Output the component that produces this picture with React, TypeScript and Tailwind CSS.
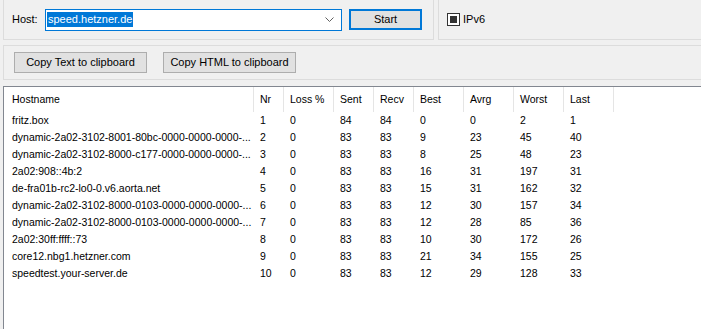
import React from 'react'

const rows = [
  ['fritz.box', '1', '0', '84', '84', '0', '0', '2', '1'],
  ['dynamic-2a02-3102-8001-80bc-0000-0000-0000-...', '2', '0', '83', '83', '9', '23', '45', '40'],
  ['dynamic-2a02-3102-8000-c177-0000-0000-0000-...', '3', '0', '83', '83', '8', '25', '48', '23'],
  ['2a02:908::4b:2', '4', '0', '83', '83', '16', '31', '197', '31'],
  ['de-fra01b-rc2-lo0-0.v6.aorta.net', '5', '0', '83', '83', '15', '31', '162', '32'],
  ['dynamic-2a02-3102-8000-0103-0000-0000-0000-...', '6', '0', '83', '83', '12', '30', '157', '34'],
  ['dynamic-2a02-3102-8000-0103-0000-0000-0000-...', '7', '0', '83', '83', '12', '28', '85', '36'],
  ['2a02:30ff:ffff::73', '8', '0', '83', '83', '10', '30', '172', '26'],
  ['core12.nbg1.hetzner.com', '9', '0', '83', '83', '21', '34', '155', '25'],
  ['speedtest.your-server.de', '10', '0', '83', '83', '12', '29', '128', '33'],
]

const headers = ['Hostname', 'Nr', 'Loss %', 'Sent', 'Recv', 'Best', 'Avrg', 'Worst', 'Last']

const grid = 'grid grid-cols-[250px_30px_50px_40px_40px_50px_50px_50px_50px]'

export default function App() {
  return (
    <div
      className="w-[701px] h-[329px] overflow-hidden bg-[#f0f0f0] pl-[3px] flex flex-col text-black"
      style={{ fontFamily: '"Liberation Sans", Arial, sans-serif' }}
    >
      {/* top bar */}
      <div className="flex h-[40px] shrink-0">
        <div className="w-[431px] border-x border-b border-[#dcdcdc] flex items-center pl-[8px] text-[11px]">
          <span className="w-[33px]">Host:</span>
          <div className="w-[297px] h-[22px] bg-white border border-[#0078d7] flex items-center pl-[1px]">
            <span className="bg-[#0078d7] text-white h-[15px] px-[1px] leading-[15px]">speed.hetzner.de</span>
            <svg className="ml-auto mr-[7px]" width="9" height="6" viewBox="0 0 9 6">
              <path d="M0.5 0.5 L4.5 4.5 L8.5 0.5" fill="none" stroke="#606060" strokeWidth="1" />
            </svg>
          </div>
          <button className="ml-[7px] w-[73px] h-[21px] bg-[#e1e1e1] border-2 border-[#0078d7] flex items-center justify-center">
            Start
          </button>
        </div>
        <div className="ml-[4px] flex-1 border-l border-b border-[#dcdcdc] flex items-center pl-[8px] text-[11px]">
          <span className="w-[13px] h-[13px] border border-[#333] bg-white flex items-center justify-center">
            <span className="w-[7px] h-[7px] bg-[#333]" />
          </span>
          <span className="ml-[3px]">IPv6</span>
        </div>
      </div>

      {/* copy buttons */}
      <div className="mt-[5px] h-[35px] shrink-0 border-l border-y border-[#dcdcdc] flex items-center pl-[10px] gap-[16px] text-[11px]">
        <button className="w-[133px] h-[21px] bg-[#e1e1e1] border border-[#adadad]">Copy Text to clipboard</button>
        <button className="w-[133px] h-[21px] bg-[#e1e1e1] border border-[#adadad]">Copy HTML to clipboard</button>
      </div>

      {/* list view */}
      <div className="mt-[6px] flex-1 bg-white border-l border-t border-[#828790] text-[10.5px]">
        <div className={`${grid} h-[25px] items-stretch`}>
          {headers.map((h, i) => (
            <div
              key={h}
              className={`border-r border-[#e5e5e5] flex items-center ${i === 0 ? 'pl-[8px]' : 'pl-[6px]'}`}
            >
              {h}
            </div>
          ))}
        </div>
        {rows.map((r, ri) => (
          <div key={ri} className={`${grid} h-[17px] items-center`}>
            {r.map((c, ci) => (
              <div key={ci} className={`whitespace-nowrap overflow-hidden ${ci === 0 ? 'pl-[8px]' : 'pl-[6px]'}`}>
                {c}
              </div>
            ))}
          </div>
        ))}
      </div>
    </div>
  )
}
